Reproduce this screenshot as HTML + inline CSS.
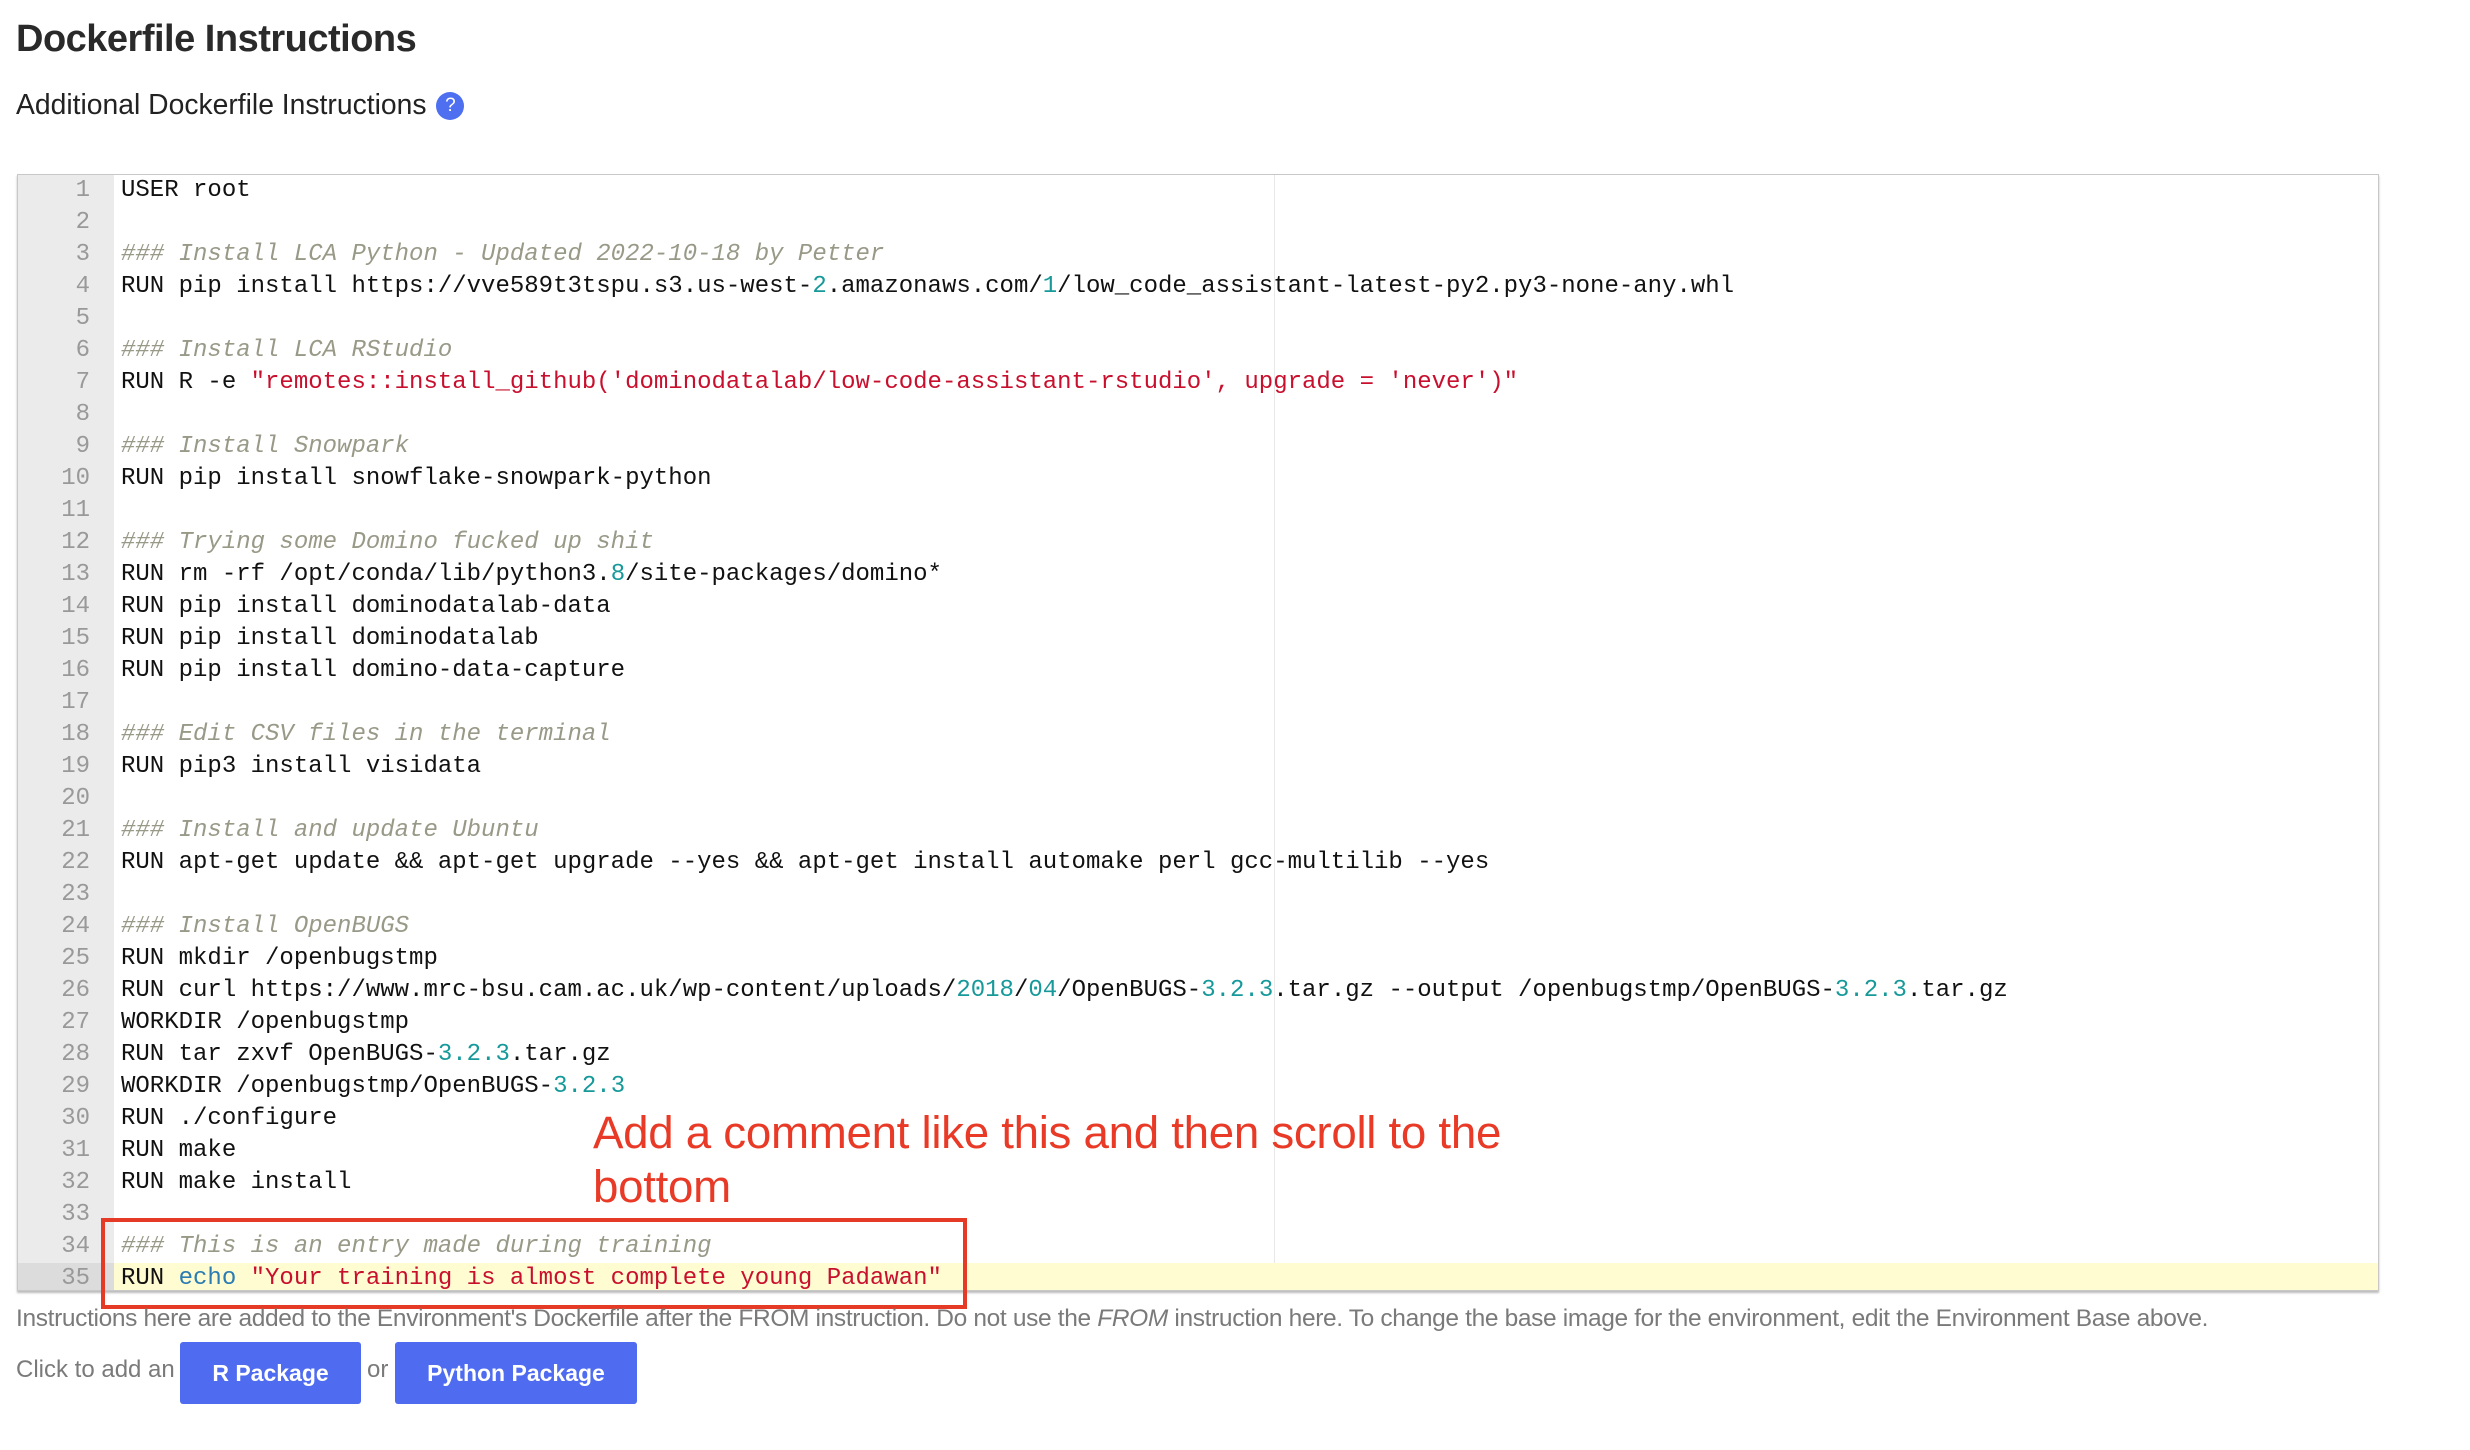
<!DOCTYPE html>
<html><head><meta charset="utf-8"><style>
*{margin:0;padding:0;box-sizing:border-box}
body{width:2470px;height:1450px;background:#fff;font-family:"Liberation Sans",sans-serif;position:relative;overflow:hidden;color:#222}
h1{position:absolute;left:16px;top:18px;font-size:38px;font-weight:bold;color:#2a2a2a;letter-spacing:-0.5px}
.sub{position:absolute;left:16px;top:88px;font-size:28.3px;color:#222}
.help{display:inline-block;width:28px;height:28px;border-radius:50%;background:#4d6ff0;color:#fff;font-size:19px;text-align:center;line-height:28px;vertical-align:3px;margin-left:2px}
.ed{position:absolute;left:17px;top:174px;width:2362px;height:1117px;border:1px solid #c8c8c8;box-shadow:0 2px 2px #bbb;overflow:hidden;background:#fff}
.gut{position:absolute;left:0;top:0;width:96px;height:100%;background:#ebebeb}
.margin{position:absolute;left:1256px;top:0;width:1px;height:100%;background:#e8e8e8}
.ln{position:absolute;left:0;width:100%;height:32px;line-height:32px;font-family:"Liberation Mono",monospace;font-size:24px;white-space:pre}
.ln .n{position:absolute;left:0;width:72px;text-align:right;color:#999}
.ln .c{position:absolute;left:103px;color:#111}
.hl{background:#fffcd2}
.hl .n{background:#dcdcdc;width:96px;padding-right:24px}
.ln .cm{color:#999988;font-style:italic}
.s{color:#c8102e}
.d{color:#17999a}
.k{color:#2b7cb3}
.note{position:absolute;left:593px;top:1106px;font-size:45.7px;color:#e83a26;line-height:54px;letter-spacing:-0.3px}
.box{position:absolute;left:101px;top:1218px;width:866px;height:91px;border:4px solid #e53a26}
.foot{position:absolute;left:16px;top:1305px;font-size:24.5px;color:#7a7a7a;letter-spacing:-0.35px}
.click{position:absolute;left:16px;top:1356px;font-size:24px;color:#7a7a7a}
.btn{position:absolute;top:1342px;height:62px;background:#4f6cf0;color:#fff;border-radius:3px;font-size:23px;font-weight:bold;text-align:center;line-height:62px}
.or{position:absolute;left:367px;top:1356px;font-size:24px;color:#7a7a7a}
</style></head><body>
<h1>Dockerfile Instructions</h1>
<div class="sub">Additional Dockerfile Instructions <span class="help">?</span></div>
<div class="ed">
<div class="gut"></div>
<div class="margin"></div>
<div class="ln" style="top:0px"><span class="n">1</span><span class="c">USER root</span></div>
<div class="ln" style="top:32px"><span class="n">2</span><span class="c"></span></div>
<div class="ln" style="top:64px"><span class="n">3</span><span class="c cm">### Install LCA Python - Updated 2022-10-18 by Petter</span></div>
<div class="ln" style="top:96px"><span class="n">4</span><span class="c">RUN pip install https://vve589t3tspu.s3.us-west-<span class="d">2</span>.amazonaws.com/<span class="d">1</span>/low_code_assistant-latest-py2.py3-none-any.whl</span></div>
<div class="ln" style="top:128px"><span class="n">5</span></div>
<div class="ln" style="top:160px"><span class="n">6</span><span class="c cm">### Install LCA RStudio</span></div>
<div class="ln" style="top:192px"><span class="n">7</span><span class="c">RUN R -e <span class="s">"remotes::install_github('dominodatalab/low-code-assistant-rstudio', upgrade = 'never')"</span></span></div>
<div class="ln" style="top:224px"><span class="n">8</span></div>
<div class="ln" style="top:256px"><span class="n">9</span><span class="c cm">### Install Snowpark</span></div>
<div class="ln" style="top:288px"><span class="n">10</span><span class="c">RUN pip install snowflake-snowpark-python</span></div>
<div class="ln" style="top:320px"><span class="n">11</span></div>
<div class="ln" style="top:352px"><span class="n">12</span><span class="c cm">### Trying some Domino fucked up shit</span></div>
<div class="ln" style="top:384px"><span class="n">13</span><span class="c">RUN rm -rf /opt/conda/lib/python3.<span class="d">8</span>/site-packages/domino*</span></div>
<div class="ln" style="top:416px"><span class="n">14</span><span class="c">RUN pip install dominodatalab-data</span></div>
<div class="ln" style="top:448px"><span class="n">15</span><span class="c">RUN pip install dominodatalab</span></div>
<div class="ln" style="top:480px"><span class="n">16</span><span class="c">RUN pip install domino-data-capture</span></div>
<div class="ln" style="top:512px"><span class="n">17</span></div>
<div class="ln" style="top:544px"><span class="n">18</span><span class="c cm">### Edit CSV files in the terminal</span></div>
<div class="ln" style="top:576px"><span class="n">19</span><span class="c">RUN pip3 install visidata</span></div>
<div class="ln" style="top:608px"><span class="n">20</span></div>
<div class="ln" style="top:640px"><span class="n">21</span><span class="c cm">### Install and update Ubuntu</span></div>
<div class="ln" style="top:672px"><span class="n">22</span><span class="c">RUN apt-get update &amp;&amp; apt-get upgrade --yes &amp;&amp; apt-get install automake perl gcc-multilib --yes</span></div>
<div class="ln" style="top:704px"><span class="n">23</span></div>
<div class="ln" style="top:736px"><span class="n">24</span><span class="c cm">### Install OpenBUGS</span></div>
<div class="ln" style="top:768px"><span class="n">25</span><span class="c">RUN mkdir /openbugstmp</span></div>
<div class="ln" style="top:800px"><span class="n">26</span><span class="c">RUN curl https://www.mrc-bsu.cam.ac.uk/wp-content/uploads/<span class="d">2018</span>/<span class="d">04</span>/OpenBUGS-<span class="d">3.2.3</span>.tar.gz --output /openbugstmp/OpenBUGS-<span class="d">3.2.3</span>.tar.gz</span></div>
<div class="ln" style="top:832px"><span class="n">27</span><span class="c">WORKDIR /openbugstmp</span></div>
<div class="ln" style="top:864px"><span class="n">28</span><span class="c">RUN tar zxvf OpenBUGS-<span class="d">3.2.3</span>.tar.gz</span></div>
<div class="ln" style="top:896px"><span class="n">29</span><span class="c">WORKDIR /openbugstmp/OpenBUGS-<span class="d">3.2.3</span></span></div>
<div class="ln" style="top:928px"><span class="n">30</span><span class="c">RUN ./configure</span></div>
<div class="ln" style="top:960px"><span class="n">31</span><span class="c">RUN make</span></div>
<div class="ln" style="top:992px"><span class="n">32</span><span class="c">RUN make install</span></div>
<div class="ln" style="top:1024px"><span class="n">33</span></div>
<div class="ln" style="top:1056px"><span class="n">34</span><span class="c cm">### This is an entry made during training</span></div>
<div class="ln hl" style="top:1088px"><span class="n">35</span><span class="c">RUN <span class="k">echo</span> <span class="s">"Your training is almost complete young Padawan"</span></span></div>
</div>
<div class="note">Add a comment like this and then scroll to the<br>bottom</div>
<div class="box"></div>
<div class="foot">Instructions here are added to the Environment's Dockerfile after the FROM instruction. Do not use the <i>FROM</i> instruction here. To change the base image for the environment, edit the Environment Base above.</div>
<div class="click">Click to add an</div>
<div class="btn" style="left:180px;width:181px">R Package</div>
<div class="or">or</div>
<div class="btn" style="left:395px;width:242px">Python Package</div>
</body></html>
